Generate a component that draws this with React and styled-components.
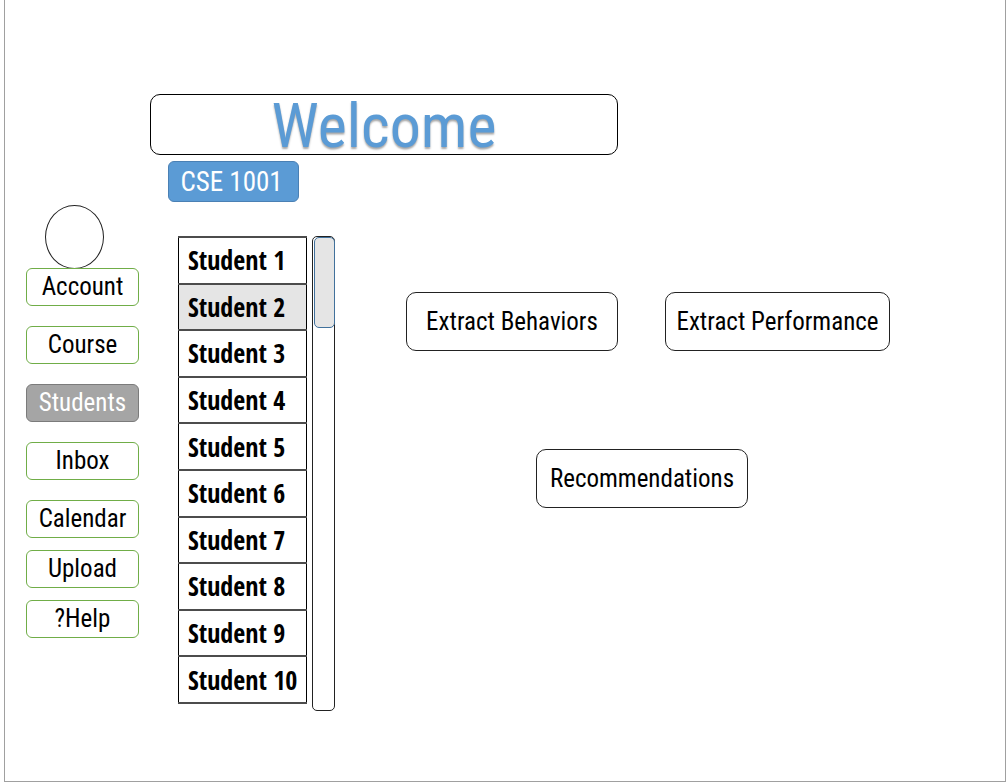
import React, { useState } from 'react';
import styled, { createGlobalStyle, css } from 'styled-components';

const GlobalStyle = createGlobalStyle`
  *, *::before, *::after { box-sizing: border-box; }
  body {
    margin: 0;
    background: #fff;
    color: #000;
    font-family: 'Roboto Condensed', Carlito, Lato, sans-serif;
    font-size: 25px;
    line-height: 28px;
  }
  button { font: inherit; color: inherit; cursor: pointer; }
`;

const Frame = styled.div`
  display: flex;
  gap: 11px;
  min-height: calc(100vh - 2px);
  margin: 0 2px 2px 4px;
  padding: 94px 24px 70px 21px;
  border: solid #a0a0a0;
  border-width: 0 1px 1px;
`;

const Sidebar = styled.aside`
  flex: none;
  width: 113px;
  padding-top: 111px;
`;

const Avatar = styled.div`
  width: 59px;
  height: 64px;
  margin: 0 0 -1px 19px;
  border: 1px solid #222;
  border-radius: 50%;
`;

const NavGroup = styled.nav`
  display: flex;
  flex-direction: column;
  gap: ${(p) => (p.$tight ? 12 : 20)}px;
  margin-top: ${(p) => (p.$tight ? 12 : 0)}px;
`;

const NavButton = styled.button`
  height: 38px;
  padding: 0;
  border: 1px solid #70ad47;
  border-radius: 6px;
  background: #fff;
  ${(p) =>
    p.$active &&
    css`
      && { color: #fff; }
      border-color: #7b7b7b;
      background: #a5a5a5;
    `}
`;

const Main = styled.main`
  flex: 1;
  min-width: 0;
`;

const Banner = styled.header`
  max-width: 468px;
  height: 61px;
  border: 1px solid #000;
  border-radius: 10px;
  text-align: center;
`;

const Title = styled.h1`
  margin: 0;
  color: #5b9bd5;
  font-size: 62px;
  font-weight: 400;
  line-height: 62px;
  text-shadow: 0 2px 2px rgba(0, 0, 0, 0.35);
`;

const CourseButton = styled.button`
  display: block;
  width: 131px;
  height: 41px;
  margin: 6px 0 34px 18px;
  padding: 0 4px 0 0;
  border: 1px solid #4a80b4;
  border-radius: 6px;
  background: #5b9bd5;
  font-size: 27px;

  && { color: #fff; }
`;

const Workspace = styled.div`
  display: flex;
  align-items: flex-start;
  padding-left: 28px;
`;

const StudentTable = styled.table`
  flex: none;
  width: 129px;
  height: 468px;
  border-collapse: collapse;
`;

const StudentCell = styled.td`
  padding: 0 0 0 9px;
  border: 1px solid #000;
  border-width: 2px 1px;
  border-color: #4c4c4c #000;
  background: ${(p) => (p.$selected ? '#e5e5e5' : '#fff')};
  font-family: 'Open Sans Condensed', 'Roboto Condensed', Carlito, sans-serif;
  font-size: 26px;
  font-weight: 700;
  line-height: 28px;
  white-space: nowrap;
  cursor: pointer;
`;

const ScrollTrack = styled.div`
  flex: none;
  width: 23px;
  height: 475px;
  margin-left: 5px;
  border: 1px solid #222;
  border-radius: 5px;
`;

const ScrollThumb = styled.div`
  height: 91px;
  margin: 0 -1px 0 1px;
  border: 1px solid #41719c;
  border-radius: 5px;
  background: #e5e5e5;
`;

const Actions = styled.div`
  flex: 1;
  display: flex;
  flex-direction: column;
  gap: 98px;
  padding: 56px 0 0 71px;
`;

const ActionRow = styled.div`
  display: flex;
  gap: 47px;
  padding-left: ${(p) => (p.$indent ? 130 : 0)}px;
`;

const ActionButton = styled.button`
  flex: none;
  width: ${(p) => (p.$wide ? 225 : 212)}px;
  height: 59px;
  padding: 0;
  border: 1px solid #222;
  border-radius: 10px;
  background: #fff;
  white-space: nowrap;
`;

const mainNav = ['Account', 'Course', 'Students', 'Inbox', 'Calendar'];
const extraNav = ['Upload', '?Help'];
const students = Array.from({ length: 10 }, (_, i) => `Student ${i + 1}`);

export default function App() {
  const [page, setPage] = useState('Students');
  const [student, setStudent] = useState('Student 2');

  const renderNav = (label) => (
    <NavButton
      key={label}
      type="button"
      $active={page === label}
      onClick={() => setPage(label)}
    >
      {label}
    </NavButton>
  );

  return (
    <>
      <GlobalStyle />
      <Frame>
        <Sidebar>
          <Avatar />
          <NavGroup>{mainNav.map(renderNav)}</NavGroup>
          <NavGroup $tight>{extraNav.map(renderNav)}</NavGroup>
        </Sidebar>
        <Main>
          <Banner>
            <Title>Welcome</Title>
          </Banner>
          <CourseButton type="button">CSE 1001</CourseButton>
          <Workspace>
            <StudentTable>
              <tbody>
                {students.map((name) => (
                  <tr key={name} onClick={() => setStudent(name)}>
                    <StudentCell $selected={student === name}>{name}</StudentCell>
                  </tr>
                ))}
              </tbody>
            </StudentTable>
            <ScrollTrack>
              <ScrollThumb />
            </ScrollTrack>
            <Actions>
              <ActionRow>
                <ActionButton type="button">Extract Behaviors</ActionButton>
                <ActionButton type="button" $wide>Extract Performance</ActionButton>
              </ActionRow>
              <ActionRow $indent>
                <ActionButton type="button">Recommendations</ActionButton>
              </ActionRow>
            </Actions>
          </Workspace>
        </Main>
      </Frame>
    </>
  );
}
